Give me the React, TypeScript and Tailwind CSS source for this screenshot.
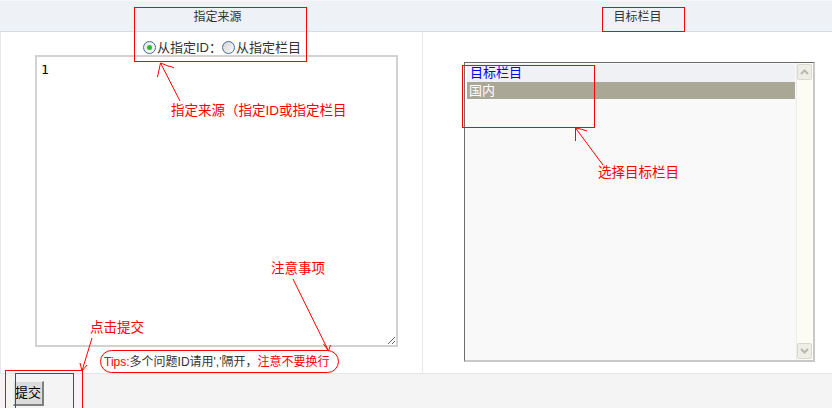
export default function App() {
  return (
    <div className="relative w-[832px] h-[408px] overflow-hidden bg-white font-['Liberation_Sans','Noto_Sans_CJK_SC',sans-serif] text-[#333]">
      {/* header */}
      <div className="flex h-[32px] bg-[#eef2f6] border-t border-t-[#f6f8fa] border-b border-b-[#d6dde4]">
        <div className="w-[423px] pl-[12px] pt-[8px] text-center text-[12px] leading-[16px]">指定来源</div>
        <div className="flex-1 pl-[20px] pt-[8px] text-center text-[12px] leading-[16px]">目标栏目</div>
      </div>

      {/* body */}
      <div className="flex h-[341px]">
        <div className="w-[423px] border-l border-r border-[#e8e8e8] flex flex-col">
          <div className="mt-[8px] ml-[142px] flex items-center h-[15px] text-[13px] leading-[15px]">
            <span className="relative flex items-center justify-center w-[13px] h-[13px] rounded-full border border-[#3f6a98] bg-gradient-to-br from-[#e6e6e6] to-white">
              <span className="w-[5px] h-[5px] rounded-full bg-[#2db82d]" />
            </span>
            <span className="ml-[1px]">从指定ID：</span>
            <span className="ml-[0px] w-[13px] h-[13px] rounded-full border border-[#3f6a98] bg-gradient-to-br from-[#d4d4d4] to-[#fafafa]" />
            <span className="ml-[1px]">从指定栏目</span>
          </div>
          <textarea
            readOnly
            value="1"
            className="ml-[34px] w-[363px] h-[292px] border-2 border-[#d2d2d2] bg-white pl-[4px] pt-[5px] font-['DejaVu_Sans_Mono',monospace] text-[13px] leading-[16px] text-black outline-none"
          />
          <div className="mt-[3px] ml-[99px] w-[239px] h-[23px] rounded-full border border-[#ff0000] flex items-center pl-[3px] text-[12px] leading-[14px] whitespace-nowrap">
            <span className="text-[#ff0000]">Tips:</span>
            <span className="text-[#333]">多个问题ID请用','隔开，</span>
            <span className="text-[#ff0000]">注意不要换行</span>
          </div>
        </div>
        <div className="flex-1">
          <div className="ml-[41px] mt-[30px] w-[351px] h-[300px] border-l border-t border-[#6b6b6b] border-r-2 border-b-2 border-r-[#c8c8c8] border-b-[#c8c8c8] bg-[#f9f9f9] flex">
            <div className="flex-1 pl-[2px] pt-[1px] pr-[1px] text-[13px]">
              <div className="h-[18px] leading-[18px] bg-[#eff1f4] pl-[3px] text-[#0000ff]">目标栏目</div>
              <div className="h-[17px] leading-[17px] bg-[#aaa797] pl-[2px] text-white">国内</div>
            </div>
            <div className="w-[17px] bg-[#fcfcf5] border-l border-[#ececec] flex flex-col justify-between py-[1px]">
              <div className="ml-[0px] w-[15px] h-[16px] rounded-[2px] border border-[#d8d8cc] bg-[#eeeee6] flex items-center justify-center">
                <svg width="9" height="6" viewBox="0 0 9 6">
                  <path d="M1 5 L4.5 1.5 L8 5" fill="none" stroke="#b8b8b0" strokeWidth="2" />
                </svg>
              </div>
              <div className="ml-[0px] w-[15px] h-[16px] rounded-[2px] border border-[#d8d8cc] bg-[#eeeee6] flex items-center justify-center">
                <svg width="9" height="6" viewBox="0 0 9 6">
                  <path d="M1 1 L4.5 4.5 L8 1" fill="none" stroke="#b8b8b0" strokeWidth="2" />
                </svg>
              </div>
            </div>
          </div>
        </div>
      </div>

      {/* footer */}
      <div className="h-[35px] bg-[#f4f4f4] border-t border-[#e6e6e6] pt-[6px] pl-[13px]">
        <button className="w-[31px] h-[25px] bg-[#dcdcdc] border border-t-[#f0f0f0] border-l-[#f0f0f0] border-r-[#808080] border-b-[#808080] border-r-2 border-b-2 text-[13px] leading-[20px] text-black font-['Liberation_Sans','Noto_Sans_CJK_SC',sans-serif] p-0">
          提交
        </button>
      </div>

      {/* annotations */}
      <svg className="absolute left-0 top-0 pointer-events-none" width="832" height="408" viewBox="0 0 832 408">
        <g fill="none" stroke="#ff0000" strokeWidth="1" shapeRendering="crispEdges">
          <rect x="134.5" y="7.5" width="172" height="54" />
          <rect x="602.5" y="7.5" width="82" height="24" />
          <rect x="462.5" y="65.5" width="132" height="62" />
          <rect x="5.5" y="370.5" width="77" height="50" />
          <rect x="15.5" y="373.5" width="58" height="50" />
        </g>
        <g fill="none" stroke="#ff0000" strokeWidth="1">
          <path d="M180 101 L160.5 63 M160.5 63 L157.5 77 M160.5 63 Q166 65 168 66 Q171 66 174 68" />
          <path d="M603 165 L575.5 128 M575.5 128 L575.5 141 M575.5 128 Q582 129 587 131" />
          <path d="M293 279 L328.5 351 M328.5 351 L323.5 344 M328.5 351 L330.5 345" />
          <path d="M92 338 L82 371 M82 371 L80 363 M82 371 L87 365" />
        </g>
      </svg>
      <span className="absolute left-[171px] top-[103px] text-[13.5px] leading-[16px] text-[#ff0000] whitespace-nowrap">指定来源（指定ID或指定栏目</span>
      <span className="absolute left-[598px] top-[165px] text-[13.5px] leading-[16px] text-[#ff0000] whitespace-nowrap">选择目标栏目</span>
      <span className="absolute left-[271px] top-[261px] text-[13.5px] leading-[16px] text-[#ff0000] whitespace-nowrap">注意事项</span>
      <span className="absolute left-[90px] top-[320px] text-[13.5px] leading-[16px] text-[#ff0000] whitespace-nowrap">点击提交</span>
    </div>
  );
}
